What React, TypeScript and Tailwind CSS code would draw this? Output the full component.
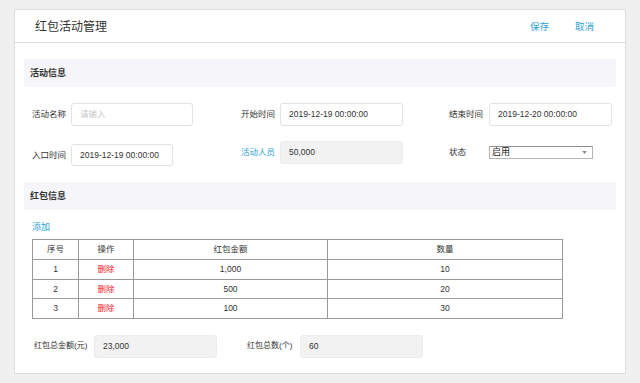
import React from "react";

const FONT = { fontFamily: '"Liberation Sans", "Noto Sans CJK SC", sans-serif' };

const ROWS = [
  { no: 1, amount: "1,000", count: 10 },
  { no: 2, amount: "500", count: 20 },
  { no: 3, amount: "100", count: 30 },
];

function SectionBar({ title }: { title: string }) {
  return (
    <div className="h-[28px] bg-[#f6f6fa] flex items-center pl-[6px] text-[9px] font-bold text-[#333] leading-none">
      {title}
    </div>
  );
}

function TextBox({ value, placeholder, w, gray, h = "h-[23px]" }: { value?: string; placeholder?: string; w: string; gray?: boolean; h?: string }) {
  return (
    <div
      className={`${w} ${h} rounded-[3px] border flex items-center px-[8px] text-[8.5px] leading-none ${
        gray ? "bg-[#f2f2f2] border-[#ececec] text-[#333]" : "bg-white border-[#e2e2e2] text-[#333]"
      }`}
    >
      {value ? value : <span className="text-[#c8c8c8]">{placeholder}</span>}
    </div>
  );
}

export default function App() {
  return (
    <div className="w-[640px] h-[383px] bg-[#f0f0f0] pt-[9px] pl-[14px]" style={FONT}>
      <div className="w-[612px] h-[365px] bg-white border border-[#dcdcdc] flex flex-col">
        {/* header */}
        <div className="h-[33px] shrink-0 border-b border-[#dcdcdc] flex items-center pl-[20px] pr-[31px] pt-[2px]">
          <span className="text-[12px] text-[#333] leading-none">红包活动管理</span>
          <div className="ml-auto flex gap-[26px] text-[9.5px] text-[#2a9fd8] leading-none">
            <span>保存</span>
            <span>取消</span>
          </div>
        </div>

        <div className="px-[9px] pt-[16px]">
          <SectionBar title="活动信息" />

          {/* form row 1 */}
          <div className="flex items-center mt-[16px] pl-[8px] text-[8.5px] text-[#333] leading-none">
            <div className="w-[209px] flex items-center">
              <span className="w-[39px]">活动名称</span>
              <TextBox placeholder="请输入" w="w-[122px]" />
            </div>
            <div className="w-[208px] flex items-center">
              <span className="w-[39px]">开始时间</span>
              <TextBox value="2019-12-19 00:00:00" w="w-[123px]" />
            </div>
            <div className="flex items-center">
              <span className="w-[40px]">结束时间</span>
              <TextBox value="2019-12-20 00:00:00" w="w-[123px]" />
            </div>
          </div>

          {/* form row 2 */}
          <div className="flex items-start mt-[15px] pl-[8px] text-[8.5px] text-[#333] leading-none">
            <div className="w-[209px] flex items-center mt-[3px]">
              <span className="w-[39px]">入口时间</span>
              <TextBox value="2019-12-19 00:00:00" w="w-[102px]" h="h-[22px]" />
            </div>
            <div className="w-[208px] flex items-center">
              <span className="w-[39px] text-[#2a9fd8]">活动人员</span>
              <TextBox value="50,000" w="w-[123px]" gray />
            </div>
            <div className="flex items-center mt-[5px]">
              <span className="w-[40px]">状态</span>
              <div className="w-[104px] h-[13px] bg-white border border-[#b5b5b5] border-t-[#8f8f8f] flex items-center pl-[2px] pr-[5px] text-[9px] text-[#222]">
                <span>启用</span>
                <svg className="ml-auto" width="5" height="3" viewBox="0 0 6 4">
                  <path d="M0 0 L6 0 L3 4 Z" fill="#8a8a8a" />
                </svg>
              </div>
            </div>
          </div>

          <div className="mt-[16px]">
            <SectionBar title="红包信息" />
          </div>

          <div className="mt-[13px] pl-[8px] text-[9px] text-[#2a9fd8] leading-none h-[10px]">添加</div>

          {/* table */}
          <div className="mt-[6px] ml-[8px]">
            <table className="border-collapse text-[8.5px] text-[#333] leading-none text-center">
              <thead>
                <tr className="h-[20px]">
                  <th className="w-[46px] border border-[#9a9a9a] font-normal">序号</th>
                  <th className="w-[55px] border border-[#9a9a9a] font-normal">操作</th>
                  <th className="w-[194px] border border-[#9a9a9a] font-normal">红包金额</th>
                  <th className="w-[235px] border border-[#9a9a9a] font-normal">数量</th>
                </tr>
              </thead>
              <tbody>
                {ROWS.map((r) => (
                  <tr key={r.no} className="h-[19.5px]">
                    <td className="border border-[#9a9a9a]">{r.no}</td>
                    <td className="border border-[#9a9a9a] text-[#f5222d]">删除</td>
                    <td className="border border-[#9a9a9a]">{r.amount}</td>
                    <td className="border border-[#9a9a9a]">{r.count}</td>
                  </tr>
                ))}
              </tbody>
            </table>
          </div>

          {/* totals */}
          <div className="flex items-center mt-[16px] pl-[10px] text-[8px] text-[#333] leading-none">
            <span className="w-[60px]">红包总金额(元)</span>
            <TextBox value="23,000" w="w-[123px]" gray />
            <span className="ml-[30px] w-[53px]">红包总数(个)</span>
            <TextBox value="60" w="w-[123px]" gray />
          </div>
        </div>
      </div>
    </div>
  );
}
